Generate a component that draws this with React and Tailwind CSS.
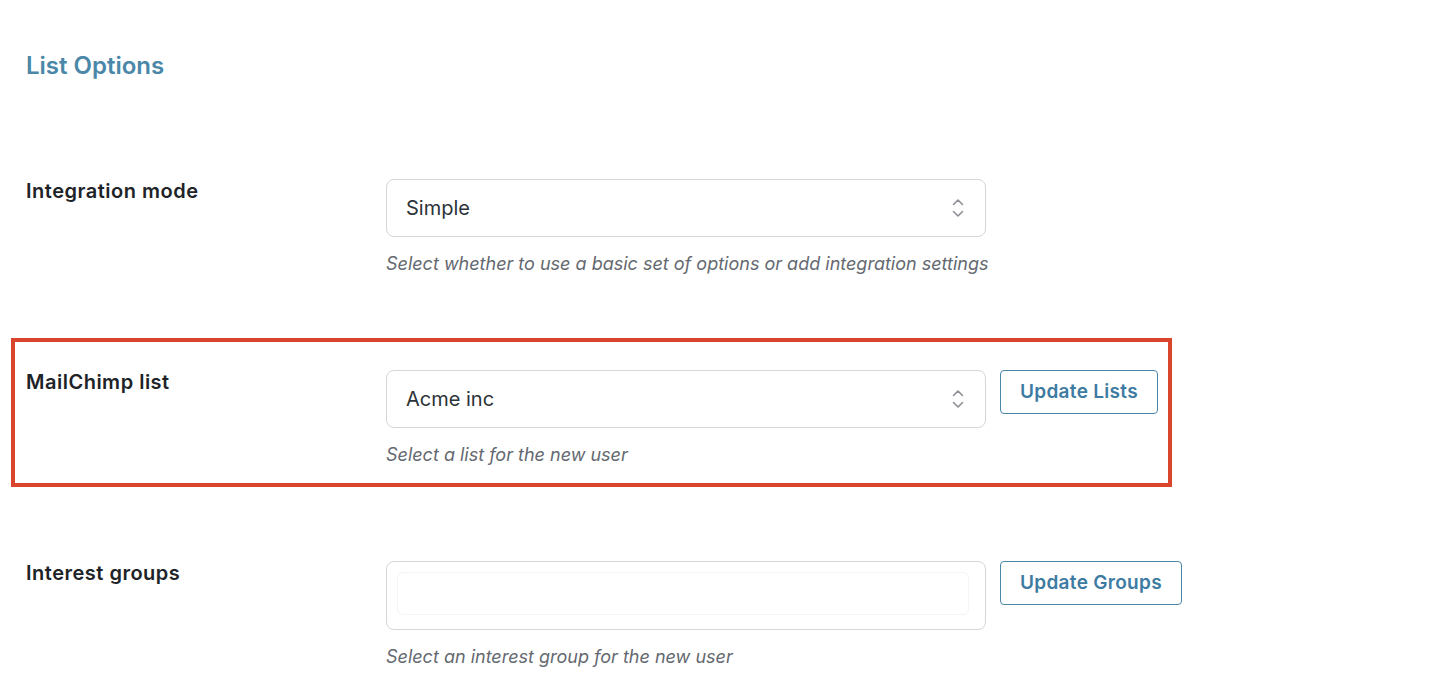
const font = { fontFamily: 'Inter, "Noto Sans", sans-serif' }

function Chevrons() {
  return (
    <svg width="14" height="22" viewBox="0 0 14 22" fill="none" className="text-[#8c8f94]">
      <path d="M2.5 7.5 7 3l4.5 4.5" stroke="currentColor" strokeWidth="1.6" strokeLinecap="round" strokeLinejoin="round" />
      <path d="M2.5 14.5 7 19l4.5-4.5" stroke="currentColor" strokeWidth="1.6" strokeLinecap="round" strokeLinejoin="round" />
    </svg>
  )
}

function Select({ value }) {
  return (
    <div className="shrink-0 w-[600px] h-[58px] flex items-center justify-between pl-[19px] pr-[20px] border border-[#d4d6d9] rounded-[8px] bg-white">
      <span className="text-[20px] text-[#2c3338]">{value}</span>
      <Chevrons />
    </div>
  )
}

function Row({ label, children, description, button, highlight }) {
  return (
    <div
      className={
        highlight
          ? 'border-4 border-[#d9462d] w-[1161px] pl-[11px] pt-[28px] pb-[16px]'
          : 'border-4 border-transparent w-[1161px] pl-[11px] pt-[28px] pb-[16px]'
      }
    >
      <div className="flex items-start">
        <div className="shrink-0 w-[360px] text-[20px] tracking-[0.5px] font-semibold text-[#1d2327] leading-[24px]">{label}</div>
        <div>
          <div className="flex items-start gap-[14px]">
            {children}
            {button && (
              <button className="shrink-0 whitespace-nowrap h-[44px] px-[19px] border border-[#4a87a8] rounded-[4px] text-[19px] tracking-[0.3px] font-semibold text-[#3d7ba2] bg-white">
                {button}
              </button>
            )}
          </div>
          <p className="mt-[15px] text-[18px] italic text-[#646970] leading-[24px] whitespace-nowrap">{description}</p>
        </div>
      </div>
    </div>
  )
}

export default function App() {
  return (
    <div className="min-h-screen bg-white pl-[11px] pt-[50px]" style={font}>
      <h2 className="pl-[15px] text-[24px] font-semibold text-[#4a87a8] leading-[32px]">List Options</h2>

      <div className="mt-[65px] flex flex-col gap-[42px]">
        <Row label="Integration mode" description="Select whether to use a basic set of options or add integration settings">
          <Select value="Simple" />
        </Row>

        <Row
          highlight
          label="MailChimp list"
          button="Update Lists"
          description="Select a list for the new user"
        >
          <Select value="Acme inc" />
        </Row>

        <Row label="Interest groups" button="Update Groups" description="Select an interest group for the new user">
          <div className="shrink-0 w-[600px] h-[69px] border border-[#d4d6d9] rounded-[8px] bg-white pl-[10px] pr-[16px] pt-[10px]">
            <div className="h-[43px] border border-[#f3f4f5] rounded-[6px]" />
          </div>
        </Row>
      </div>
    </div>
  )
}
